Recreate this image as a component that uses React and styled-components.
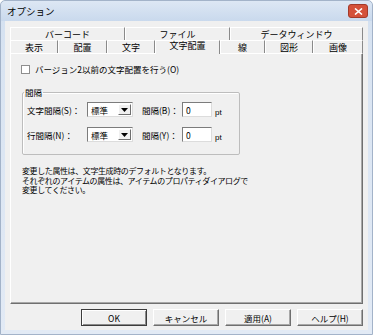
import React from 'react';
import styled, { createGlobalStyle } from 'styled-components';

const Global = createGlobalStyle`
  html, body { margin: 0; padding: 0; background: #fff; }
  body { font-family: "Noto Sans CJK JP", "Liberation Sans", sans-serif; color: #000; }
`;

const Window = styled.div`
  width: 373px;
  height: 335px;
  box-sizing: border-box;
  display: flex;
  flex-direction: column;
  background: linear-gradient(#d3e0f0, #d9e4f2 60px, #e2eaf5);
  border: 1px solid #a3b3c9;
  border-radius: 5px 5px 0 0;
`;

const TitleBar = styled.div`
  height: 20px;
  display: flex;
  align-items: center;
  justify-content: space-between;
  padding: 0 4px 0 6px;
  font-size: 9.5px;
  background: linear-gradient(#dde7f4, #c9d9ed);
  border-radius: 5px 5px 0 0;
`;

const CloseButton = styled.div`
  width: 20px;
  height: 14px;
  box-sizing: border-box;
  border: 1px solid #a33a2a;
  border-radius: 3px;
  background-color: #d4513a;
  display: flex;
  align-items: center;
  justify-content: center;
`;

const Client = styled.div`
  flex: 1;
  margin: 0 4px 4px 4px;
  background: #f0f0f0;
  padding: 6px 5px 0 5px;
  display: flex;
  flex-direction: column;
`;

const TabRow = styled.div`
  display: flex;
  height: 13px;
  position: relative;
  z-index: ${p => (p.$front ? 2 : 1)};
`;

const Tab = styled.div`
  width: ${p => p.$w}px;
  box-sizing: border-box;
  display: flex;
  align-items: center;
  justify-content: center;
  font-size: 9px;
  line-height: 1;
  border-top: 1px solid #fff;
  border-left: 1px solid #fff;
  border-right: 1px solid #8a8a8a;
  background: #f0f0f0;
  padding-bottom: ${p => (p.$active ? 4 : 0)}px;
  height: ${p => (p.$active ? 14 : 13)}px;
`;

const Panel = styled.div`
  flex: 1;
  border: 1px solid;
  border-color: #fff #6f6f6f #6f6f6f #fff;
  box-shadow: inset -1px -1px 0 #a8a8a8;
  padding: 10px 0 0 10px;
  display: flex;
  flex-direction: column;
  font-size: 8.5px;
`;

const CheckRow = styled.label`
  display: flex;
  align-items: center;
  height: 10px;
  gap: 5px;
`;

const CheckBox = styled.span`
  width: 9px;
  height: 9px;
  box-sizing: border-box;
  border: 1px solid #8e8e8e;
  background: #fff;
`;

const Group = styled.fieldset`
  width: 218px;
  box-sizing: border-box;
  margin: 13px 0 0 1px;
  padding: 5px 4px 12px 4px;
  border: 1px solid #bdbdbd;
  border-radius: 2px;
  box-shadow: inset 1px 1px 0 #fff;
  display: flex;
  flex-direction: column;
  gap: 10px;
`;

const Legend = styled.legend`
  padding: 0 1px;
  margin-left: -3px;
  font-size: 8.5px;
  line-height: 10px;
`;

const FieldRow = styled.div`
  display: flex;
  align-items: center;
  height: 15px;
`;

const Label = styled.span`
  width: ${p => p.$w}px;
  margin-left: ${p => p.$ml || 0}px;
  white-space: nowrap;
`;

const Select = styled.div`
  width: 46px;
  height: 15px;
  box-sizing: border-box;
  border: 1px solid;
  border-color: #7c7c7c #dcdcdc #dcdcdc #7c7c7c;
  background: #fff;
  display: flex;
  align-items: center;
  justify-content: space-between;
  padding-left: 3px;
`;

const ArrowBtn = styled.span`
  width: 13px;
  height: 11px;
  margin-right: 1px;
  box-sizing: border-box;
  border: 1px solid;
  border-color: #fff #6f6f6f #6f6f6f #fff;
  background: #f0f0f0;
  display: flex;
  align-items: center;
  justify-content: center;
`;

const Input = styled.div`
  width: 30px;
  height: 15px;
  box-sizing: border-box;
  border: 1px solid;
  border-color: #7c7c7c #dcdcdc #dcdcdc #7c7c7c;
  background: #fff;
  padding-left: 3px;
  display: flex;
  align-items: center;
`;

const Unit = styled.span`
  margin-left: 3px;
  align-self: flex-end;
  font-family: "Liberation Sans", sans-serif;
  font-size: 8px;
`;

const Note = styled.p`
  margin: 11px 0 0 1px;
  font-size: 8px;
  line-height: 9.5px;
  letter-spacing: -0.4px;
`;

const ButtonBar = styled.div`
  display: flex;
  justify-content: flex-end;
  gap: 6px;
  margin: 5px 0 4px;
`;

const Button = styled.div`
  width: 66px;
  height: 17px;
  box-sizing: border-box;
  font-size: 8.5px;
  display: flex;
  align-items: center;
  justify-content: center;
  background: #f0f0f0;
  border: 1px solid;
  border-color: ${p => (p.$default ? '#3c3c3c' : '#fff #6f6f6f #6f6f6f #fff')};
  box-shadow: ${p =>
    p.$default ? 'inset 1px 1px 0 #fff, inset -1px -1px 0 #8a8a8a' : 'inset -1px -1px 0 #a8a8a8'};
`;

const backTabs = [
  { label: 'バーコード', w: 115 },
  { label: 'ファイル', w: 105 },
  { label: 'データウィンドウ', w: 133 },
];

const frontTabs = [
  { label: '表示', w: 48 },
  { label: '配置', w: 49 },
  { label: '文字', w: 48 },
  { label: '文字配置', w: 65, active: true },
  { label: '線', w: 45 },
  { label: '図形', w: 48 },
  { label: '画像', w: 50 },
];

const Arrow = () => (
  <svg width="7" height="4" viewBox="0 0 7 4">
    <path d="M0 0h7L3.5 4z" fill="#000" />
  </svg>
);

const SpacingRow = ({ label, gapLabel }) => (
  <FieldRow>
    <Label $w={60}>{label}</Label>
    <Select>
      <span>標準</span>
      <ArrowBtn><Arrow /></ArrowBtn>
    </Select>
    <Label $w={40} $ml={9}>{gapLabel}</Label>
    <Input>0</Input>
    <Unit>pt</Unit>
  </FieldRow>
);

export default function App() {
  return (
    <>
      <Global />
      <Window>
        <TitleBar>
          <span>オプション</span>
          <CloseButton>
            <svg width="9" height="7" viewBox="0 0 9 7">
              <path d="M1 0.5l7 6M8 0.5l-7 6" stroke="#fff" strokeWidth="1.6" />
            </svg>
          </CloseButton>
        </TitleBar>
        <Client>
          <TabRow>
            {backTabs.map(t => (
              <Tab key={t.label} $w={t.w}>{t.label}</Tab>
            ))}
          </TabRow>
          <TabRow $front>
            {frontTabs.map(t => (
              <Tab key={t.label} $w={t.w} $active={t.active}>{t.label}</Tab>
            ))}
          </TabRow>
          <Panel>
            <CheckRow>
              <CheckBox />
              <span>バージョン2以前の文字配置を行う(O)</span>
            </CheckRow>
            <Group>
              <Legend>間隔</Legend>
              <SpacingRow label="文字間隔(S)：" gapLabel="間隔(B)：" />
              <SpacingRow label="行間隔(N)：" gapLabel="間隔(Y)：" />
            </Group>
            <Note>
              変更した属性は、文字生成時のデフォルトとなります。<br />
              それぞれのアイテムの属性は、アイテムのプロパティダイアログで<br />
              変更してください。
            </Note>
          </Panel>
          <ButtonBar>
            <Button $default>OK</Button>
            <Button>キャンセル</Button>
            <Button>適用(A)</Button>
            <Button>ヘルプ(H)</Button>
          </ButtonBar>
        </Client>
      </Window>
    </>
  );
}
